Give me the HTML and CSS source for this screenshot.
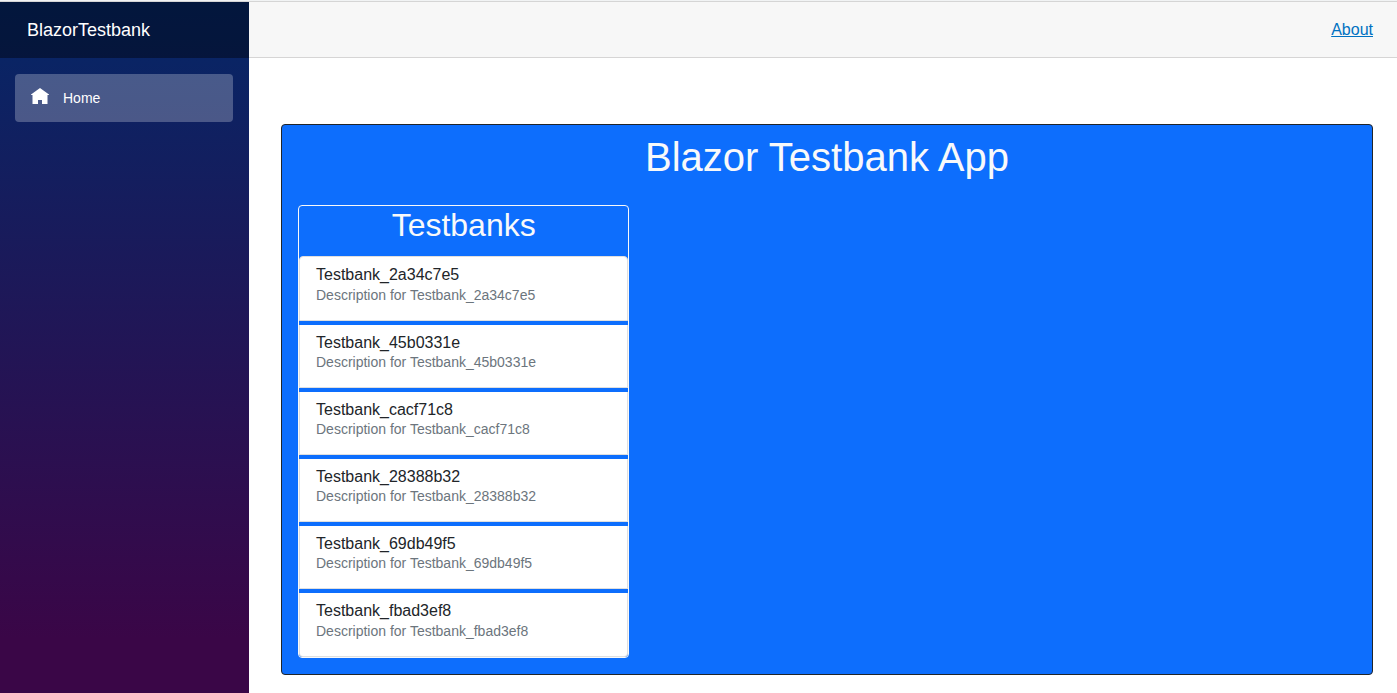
FILE: index.html
```html
<!DOCTYPE html>
<html lang="en">
<head>
<meta charset="utf-8">
<meta name="viewport" content="width=device-width, initial-scale=1">
<title>BlazorTestbank</title>
<link rel="stylesheet" href="styles.css">
</head>
<body>
<div class="page">
  <div class="sidebar">
    <header class="sidebar-top"><a class="brand" href="#">BlazorTestbank</a></header>
    <nav class="nav">
      <a class="nav-link" href="#">
        <svg class="nav-icon" viewBox="0 0 18 16" aria-hidden="true"><path fill="currentColor" d="M9 0 0 6.500V7H1.500V16H7V12H11V16H16.500V7H18V6.500z"/></svg>
        <span>Home</span>
      </a>
    </nav>
  </div>
  <main class="main">
    <div class="top-row"><a class="about" href="#">About</a></div>
    <article class="content">
      <section class="card">
        <h1 class="card-title">Blazor Testbank App</h1>
        <div class="row">
          <section class="panel">
            <h2 class="panel-title">Testbanks</h2>
            <ul class="list">
              <li class="item"><h3 class="item-name">Testbank_2a34c7e5</h3><p class="item-text">Description for Testbank_2a34c7e5</p></li>
              <li class="item"><h3 class="item-name">Testbank_45b0331e</h3><p class="item-text">Description for Testbank_45b0331e</p></li>
              <li class="item"><h3 class="item-name">Testbank_cacf71c8</h3><p class="item-text">Description for Testbank_cacf71c8</p></li>
              <li class="item"><h3 class="item-name">Testbank_28388b32</h3><p class="item-text">Description for Testbank_28388b32</p></li>
              <li class="item"><h3 class="item-name">Testbank_69db49f5</h3><p class="item-text">Description for Testbank_69db49f5</p></li>
              <li class="item"><h3 class="item-name">Testbank_fbad3ef8</h3><p class="item-text">Description for Testbank_fbad3ef8</p></li>
            </ul>
          </section>
        </div>
      </section>
    </article>
  </main>
</div>
</body>
</html>
```
FILE: styles.css
```css
* {
  box-sizing: border-box;
}

body {
  margin: 0;
  background: #fff;
  color: #212529;
  font-family: "Liberation Sans", Arial, sans-serif;
  font-size: 16px;
  line-height: 1.5;
}

h1, h2, h3, p, ul {
  margin: 0;
  padding: 0;
  font-weight: 400;
}

.page {
  display: flex;
  min-height: 100vh;
  padding-top: 1px;
  background: linear-gradient(#f1f3f4 1px, #fff 1px);
}

.sidebar {
  flex: 0 0 249px;
  border-top: 1px solid #d5d5d5;
  background: linear-gradient(180deg, rgb(5, 39, 103) 0%, #3a0647 92%);
}

.sidebar-top {
  display: flex;
  align-items: center;
  height: 56px;
  padding-left: 27px;
  background: rgba(0, 0, 0, 0.4);
}

.brand {
  color: #fff;
  font-size: 18px;
  text-decoration: none;
}

.nav {
  padding: 16px 16px 0 15px;
}

.nav-link {
  display: flex;
  align-items: center;
  gap: 14px;
  height: 48px;
  padding: 0 16px;
  border-radius: 4px;
  background: rgba(255, 255, 255, 0.25);
  color: #fff;
  font-size: 14px;
  text-decoration: none;
}

.nav-icon {
  width: 18px;
  height: 16px;
  margin-bottom: 4px;
}

.main {
  flex: 1;
  min-width: 0;
}

.top-row {
  display: flex;
  align-items: center;
  justify-content: flex-end;
  height: 57px;
  padding-right: 24px;
  border-top: 1px solid #d5d5d5;
  border-bottom: 1px solid #d6d5d5;
  background: #f7f7f7;
}

.about {
  color: #0071c1;
}

.content {
  padding: 66px 24px 0 32px;
}

.card {
  padding: 8px 0 16px;
  border: 1px solid #212529;
  border-radius: 4px;
  background: #0d6efd;
}

.card-title {
  color: #f8f9fa;
  font-size: 40px;
  line-height: 1.2;
  text-align: center;
}

.row {
  display: grid;
  grid-template-columns: repeat(3, 1fr);
  padding-top: 24px;
}

.panel {
  margin: 0 16px;
  border: 1px solid #f8f9fa;
  border-radius: 4px;
}

.panel-title {
  padding-bottom: 12px;
  color: #f8f9fa;
  font-size: 32px;
  line-height: 1.2;
  text-align: center;
}

.list {
  display: flex;
  flex-direction: column;
  gap: 4px;
  list-style: none;
}

.item {
  padding: 8px 16px 14px;
  border: 1px solid #dfdfdf;
  border-top-width: 0;
  background: #fff;
}

.item:first-child {
  border-top-width: 1px;
  border-radius: 4px 4px 0 0;
}

.item:last-child {
  border-radius: 0 0 4px 4px;
}

.item-name {
  font-size: 16px;
  line-height: 1.2;
}

.item-text {
  color: #6c757d;
  font-size: 14px;
  line-height: 1.5;
}
```
